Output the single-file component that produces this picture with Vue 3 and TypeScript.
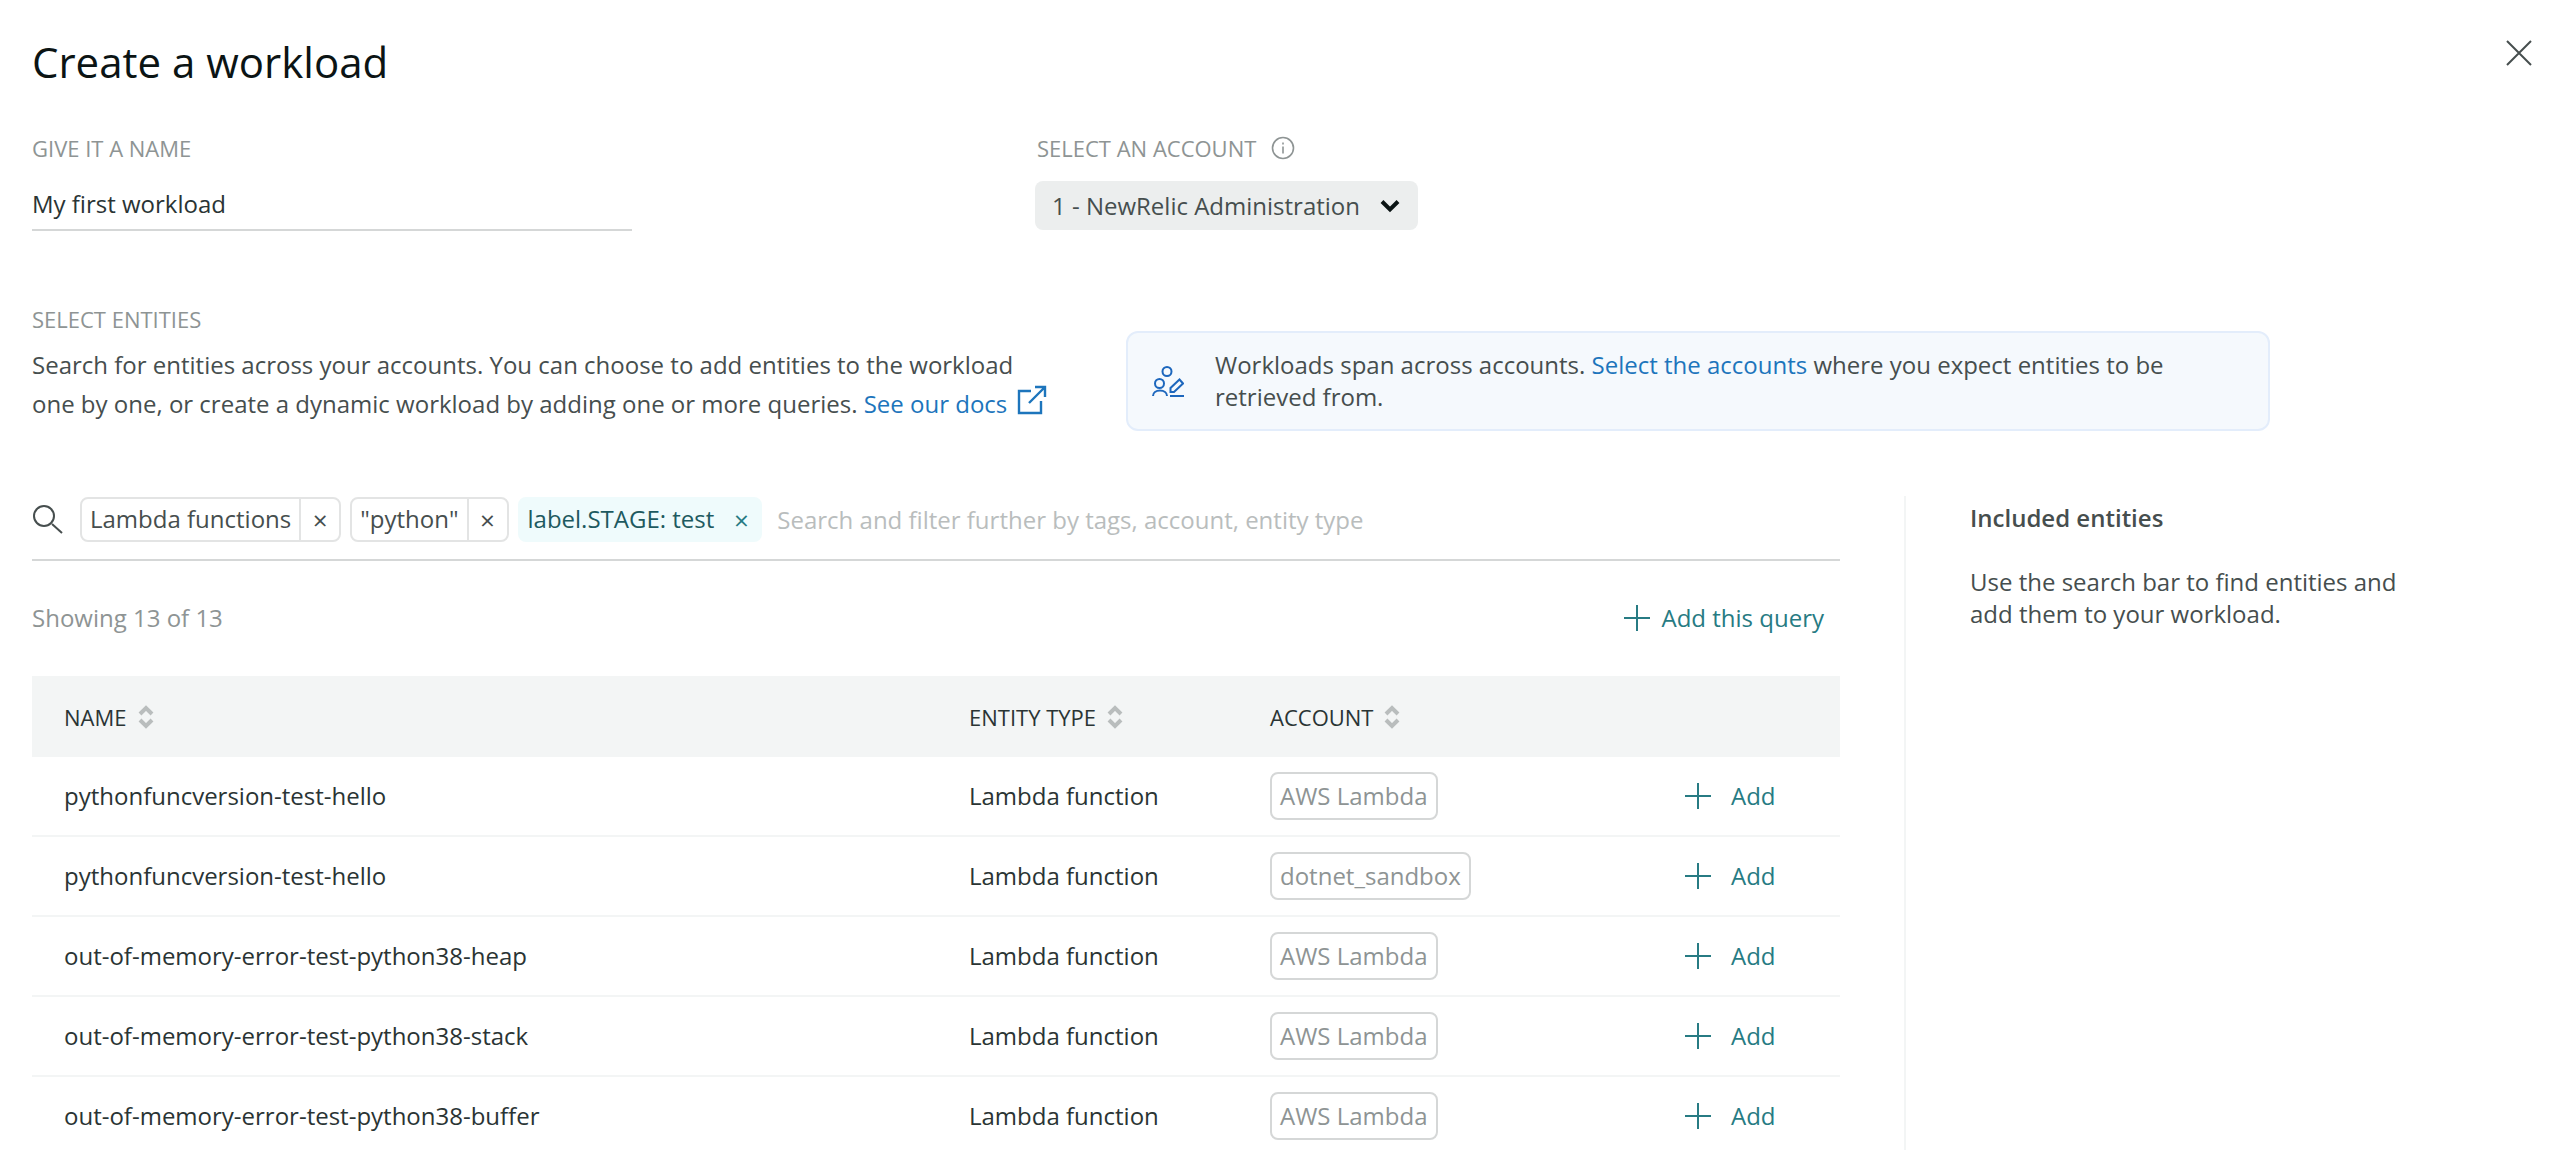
<script setup lang="ts">
interface Row {
  name: string;
  account: string;
}

const rows: Row[] = [
  { name: "pythonfuncversion-test-hello", account: "AWS Lambda" },
  { name: "pythonfuncversion-test-hello", account: "dotnet_sandbox" },
  { name: "out-of-memory-error-test-python38-heap", account: "AWS Lambda" },
  { name: "out-of-memory-error-test-python38-stack", account: "AWS Lambda" },
  { name: "out-of-memory-error-test-python38-buffer", account: "AWS Lambda" },
];

const columns = [
  { label: "NAME", cls: "col-name" },
  { label: "ENTITY TYPE", cls: "col-type" },
  { label: "ACCOUNT", cls: "col-account" },
];
</script>

<template>
  <div class="page">
    <button class="close" aria-label="Close">
      <svg width="28" height="28" viewBox="0 0 28 28" fill="none" stroke="#464e4e" stroke-width="2">
        <path d="M2 2l24 24M26 2L2 26" />
      </svg>
    </button>

    <h1 class="title">Create a workload</h1>

    <div class="fields">
      <div class="field-name">
        <div class="label">GIVE IT A NAME</div>
        <div class="name-input">My first workload</div>
      </div>
      <div class="field-account">
        <div class="label">
          SELECT AN ACCOUNT
          <svg class="info" width="24" height="24" viewBox="0 0 24 24" fill="none" stroke="#8e9494" stroke-width="1.6">
            <circle cx="12" cy="12" r="10.5" />
            <path d="M12 10.5v7M12 6.5v2" />
          </svg>
        </div>
        <div class="select">
          <span>1 - NewRelic Administration</span>
          <svg width="20" height="14" viewBox="0 0 20 14" fill="none" stroke="#0b1414" stroke-width="4">
            <path d="M2 2.5l8 8 8-8" />
          </svg>
        </div>
      </div>
    </div>

    <div class="entities">
      <div class="entities-text">
        <div class="label">SELECT ENTITIES</div>
        <p class="intro">
          Search for entities across your accounts. You can choose to add entities to the workload<br />
          one by one, or create a dynamic workload by adding one or more queries.
          <a class="link">See our docs</a>
          <svg class="ext" width="30" height="30" viewBox="0 0 30 30" fill="none" stroke="#1d75bc" stroke-width="2.4">
            <path d="M14 6H2v22h22V16M12 18L28 2M18 2h10v10" />
          </svg>
        </p>
      </div>
      <div class="notice">
        <svg class="notice-icon" width="32" height="31" viewBox="0 0 32 31" fill="none" stroke="#1d67bd" stroke-width="2">
          <circle cx="15" cy="5.5" r="4.5" />
          <circle cx="7.5" cy="17.5" r="4.5" />
          <path d="M1 30c0-3.5 3-5.5 7-5.5s7 2 7 5.5" />
          <path d="M18 30h14M18.5 26v-4l9-8.5 3.5 4-9 8.5z" />
        </svg>
        <p>
          Workloads span across accounts. <a class="link">Select the accounts</a> where you expect entities to be<br />
          retrieved from.
        </p>
      </div>
    </div>

    <div class="main">
      <div class="left">
        <div class="search">
          <svg class="search-icon" width="32" height="32" viewBox="0 0 32 32" fill="none" stroke="#464e4e" stroke-width="2">
            <circle cx="12" cy="12" r="10" />
            <path d="M20 20l10 9" />
          </svg>
          <span class="tag">
            <span class="tag-text">Lambda functions</span>
            <span class="tag-x">×</span>
          </span>
          <span class="tag">
            <span class="tag-text">"python"</span>
            <span class="tag-x">×</span>
          </span>
          <span class="tag tag-label">
            <span class="tag-text">label.STAGE: test</span>
            <span class="tag-x">×</span>
          </span>
          <span class="placeholder">Search and filter further by tags, account, entity type</span>
        </div>

        <div class="summary">
          <span class="count">Showing 13 of 13</span>
          <span class="add-query">
            <svg width="26" height="26" viewBox="0 0 26 26" stroke="#277b83" stroke-width="2">
              <path d="M13 0v26M0 13h26" />
            </svg>
            Add this query
          </span>
        </div>

        <div class="thead">
          <div v-for="col in columns" :key="col.label" :class="['th', col.cls]">
            {{ col.label }}
            <svg width="16" height="24" viewBox="0 0 16 24" fill="none" stroke="#b9bdbd" stroke-width="4">
              <path d="M2 9l6-6 6 6M2 15l6 6 6-6" />
            </svg>
          </div>
        </div>

        <div v-for="(row, i) in rows" :key="i" class="tr">
          <div class="col-name">{{ row.name }}</div>
          <div class="col-type">Lambda function</div>
          <div class="col-account"><span class="account">{{ row.account }}</span></div>
          <div class="col-add">
            <svg width="26" height="26" viewBox="0 0 26 26" stroke="#277b83" stroke-width="2">
              <path d="M13 0v26M0 13h26" />
            </svg>
            <span>Add</span>
          </div>
        </div>
      </div>

      <aside class="side">
        <h2>Included entities</h2>
        <p>Use the search bar to find entities and<br />add them to your workload.</p>
      </aside>
    </div>
  </div>
</template>

<style>
html,
body {
  margin: 0;
  background: #fff;
}
</style>

<style scoped>
.page {
  position: relative;
  box-sizing: border-box;
  height: 1150px;
  overflow: hidden;
  padding: 32px 0 0 32px;
  color: #464e4e;
  font-family: "Open Sans", sans-serif;
  font-size: 24px;
  line-height: 32px;
}

.close {
  position: absolute;
  top: 39px;
  right: 23px;
  padding: 0;
  background: none;
  border: 0;
  display: flex;
}

.title {
  margin: 0;
  height: 60px;
  color: #0b1414;
  font-size: 42px;
  font-weight: 400;
  line-height: 60px;
}

.fields {
  display: flex;
  margin-top: 40px;
}

.field-name {
  width: 1003px;
}

.label {
  display: flex;
  align-items: center;
  color: #8e9494;
  font-size: 22px;
  font-weight: 400;
  line-height: 32px;
  height: 32px;
}

.field-account .label {
  padding-left: 2px;
}

.info {
  margin-left: 15px;
}

.name-input {
  box-sizing: border-box;
  width: 600px;
  height: 50px;
  margin-top: 17px;
  color: #2a3434;
  border-bottom: 2px solid #d5d7d7;
  line-height: 45px;
}

.select {
  box-sizing: border-box;
  display: flex;
  align-items: center;
  justify-content: space-between;
  width: 383px;
  height: 49px;
  margin-top: 17px;
  padding: 0 18px 0 17px;
  background: #eceeee;
  border-radius: 8px;
}

.entities {
  display: flex;
  align-items: flex-start;
  margin-top: 72px;
}

.entities-text {
  width: 1094px;
}

.intro {
  margin: 10px 0 0;
  line-height: 39px;
}

.link {
  color: #1d75bc;
}

.ext {
  margin-left: 10px;
  vertical-align: -2px;
}

.notice {
  box-sizing: border-box;
  display: flex;
  align-items: center;
  width: 1144px;
  height: 100px;
  margin-top: 28px;
  padding-left: 24px;
  background: #f5f9fd;
  border: 2px solid #e3edfb;
  border-radius: 12px;
}

.notice p {
  margin: 0 0 0 31px;
}

.main {
  display: flex;
  margin-top: 65px;
}

.left {
  width: 1808px;
  flex: none;
}

.search {
  box-sizing: border-box;
  display: flex;
  align-items: center;
  height: 65px;
  padding-bottom: 16px;
  border-bottom: 2px solid #d5d7d7;
}

.search-icon {
  margin-right: 16px;
}

.tag {
  box-sizing: border-box;
  display: flex;
  align-items: center;
  height: 45px;
  margin-right: 9px;
  color: #464e4e;
  border: 2px solid #e3e4e4;
  border-radius: 8px;
}

.tag-text {
  padding: 0 8px 2px;
}

.tag-x {
  display: flex;
  align-items: center;
  justify-content: center;
  width: 38px;
  height: 41px;
  border-left: 2px solid #e3e4e4;
  font-size: 26px;
}

.tag-label {
  background: #effbfc;
  border-color: #effbfc;
  color: #1e5a60;
}

.tag-label .tag-x {
  border-left: 0;
  color: #277b83;
}

.placeholder {
  margin-left: 6px;
  color: #b9bdbd;
}

.summary {
  display: flex;
  align-items: center;
  justify-content: space-between;
  height: 50px;
  margin-top: 32px;
  padding-right: 16px;
}

.count {
  color: #8e9494;
  font-weight: 400;
}

.add-query {
  display: flex;
  align-items: center;
  gap: 12px;
  color: #277b83;
}

.thead,
.tr {
  display: flex;
  align-items: center;
  padding-left: 32px;
}

.thead {
  height: 81px;
  margin-top: 33px;
  background: #f3f5f5;
}

.th {
  display: flex;
  align-items: center;
  gap: 11px;
  color: #2a3434;
  font-size: 22px;
}

.tr {
  height: 80px;
  box-sizing: border-box;
  color: #2a3434;
  border-bottom: 2px solid #f3f5f5;
}

.col-name {
  width: 905px;
}

.col-type {
  width: 301px;
}

.col-account {
  width: 415px;
}

.account {
  display: inline-block;
  box-sizing: border-box;
  height: 48px;
  padding: 0 8px;
  color: #8e9494;
  line-height: 44px;
  border: 2px solid #d5d7d7;
  border-radius: 8px;
}

.col-add {
  display: flex;
  align-items: center;
  gap: 20px;
  color: #277b83;
}

.side {
  flex: 1;
  margin-left: 64px;
  padding-left: 64px;
  border-left: 2px solid #f3f5f5;
  height: 700px;
}

.side h2 {
  margin: 6px 0 0;
  font-size: 24px;
  font-weight: 600;
  line-height: 32px;
}

.side p {
  margin: 32px 0 0;
}
</style>
